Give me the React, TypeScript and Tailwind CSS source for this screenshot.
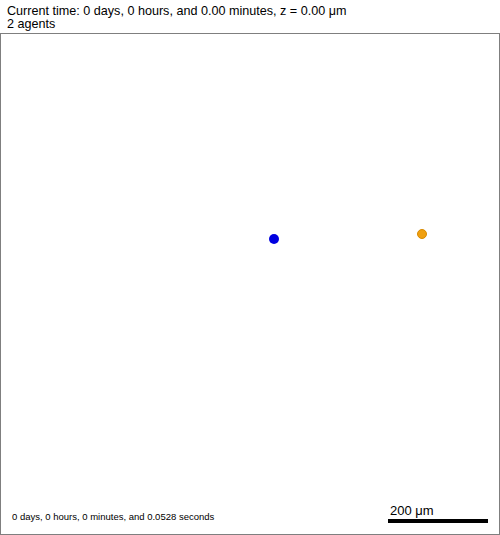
const App = () => {
  return (
    <div className="w-[500px] h-[535px] bg-white flex flex-col font-['Liberation_Sans',Arial,sans-serif] text-black">
      {/* header */}
      <div className="pl-[7px] pt-[5px] pb-[2px] text-[12.6px] leading-[13px]">
        <p>Current time: 0 days, 0 hours, and 0.00 minutes, z = 0.00 μm</p>
        <p>2 agents</p>
      </div>

      {/* simulation frame */}
      <div className="relative flex-1 border border-[#7f7f7f] flex flex-col justify-end">
        <span className="absolute left-[268px] top-[200px] w-[10px] h-[10px] rounded-full bg-[#0000e0]" />
        <span className="absolute left-[416px] top-[195px] w-[10px] h-[10px] rounded-full bg-[#f0a010] border border-[#d88a00]" />

        <div className="flex items-end justify-between pl-[11px] pr-[11px] pb-[11px]">
          <p className="text-[9.5px] leading-[10px] mb-[1px]">0 days, 0 hours, 0 minutes, and 0.0528 seconds</p>
          <div className="flex flex-col">
            <span className="pl-[2px] text-[13px] leading-[13px] mb-[2px]">200 μm</span>
            <div className="w-[100px] h-[4px] bg-black" />
          </div>
        </div>
      </div>
    </div>
  );
};

export default App;
